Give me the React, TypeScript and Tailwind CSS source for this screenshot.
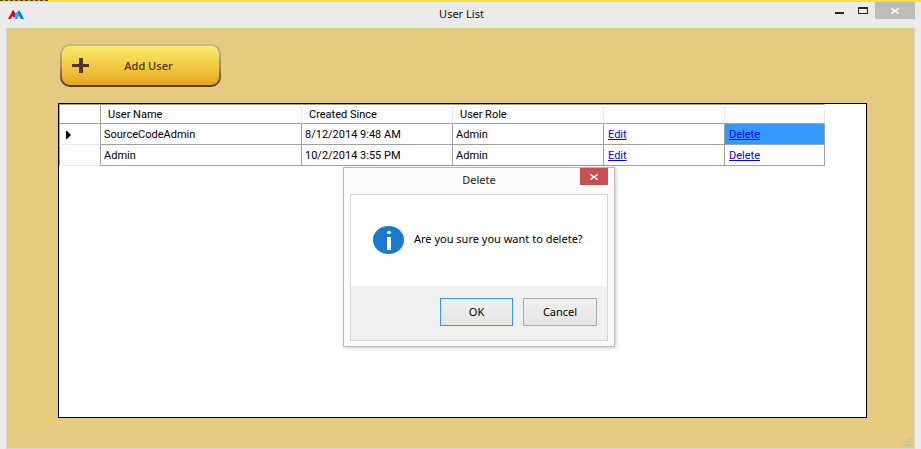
import { useState } from "react";

const users = [
  { name: "SourceCodeAdmin", created: "8/12/2014 9:48 AM", role: "Admin" },
  { name: "Admin", created: "10/2/2014 3:55 PM", role: "Admin" },
];

const headCell = "h-5 border-t border-r border-b border-t-[#a0a0a0] border-r-[#e3edfa] border-b-[#a0a0a0] bg-[#fcfcfc] pt-0.5 pl-[7px] text-left font-normal";
const bodyCell = "h-[21px] border-r border-b border-[#a0a0a0] pt-0.5 pl-[3px]";
const linkCell = "h-[21px] border-r border-b border-[#a0a0a0] pt-0.5 pl-1";

function Cross() {
  return (
    <svg viewBox="0 0 8 6" className="h-1.5 w-2" fill="none" stroke="currentColor" strokeWidth="1.4" aria-hidden="true">
      <path d="M.3 .3 7.7 5.7M7.7 .3 .3 5.7" />
    </svg>
  );
}

function TitleBar() {
  return (
    <header className="grid h-[26px] shrink-0 grid-cols-[1fr_auto_1fr] items-start pr-[6px] pl-2">
      <svg viewBox="0 0 16 10" className="mt-[7px] h-[10px] w-4" aria-hidden="true">
        <path d="M0 10 5 1 8 5 6 9 4.5 7 2.5 10Z" fill="#e00b12" />
        <path d="M5 1 7.5 6 6.5 8 4 3Z" fill="#a5131b" />
        <path d="M7 10 11 1 13 4 16 10H13L11 6.5 9 10Z" fill="#0876e8" />
        <path d="M6 9 8 4 9.5 2 11 6 9 9Z" fill="#24b7f4" />
      </svg>
      <h1 className="pt-1 text-[11px] leading-4 text-[#111]">User List</h1>
      <div className="flex items-start justify-end">
        <button aria-label="Minimize" className="flex h-[17px] w-6 items-start justify-center pt-[10px]">
          <span className="h-0.5 w-[9px] bg-[#26272c]" />
        </button>
        <button aria-label="Maximize" className="flex h-[17px] w-6 items-start justify-center pt-[5px]">
          <span className="h-[7px] w-[10px] border border-t-2 border-[#26272c]" />
        </button>
        <button aria-label="Close" className="flex h-[17px] w-10 items-center justify-center bg-[#bcbcbc] text-white">
          <Cross />
        </button>
      </div>
    </header>
  );
}

function UserTable({ onDelete }: { onDelete: () => void }) {
  return (
    <table className="w-[766px] table-fixed border-separate border-spacing-0 font-[Roboto,sans-serif] text-[11px] leading-4 text-black">
      <colgroup>
        <col className="w-[42px]" />
        <col className="w-[201px]" />
        <col className="w-[151px]" />
        <col className="w-[151px]" />
        <col className="w-[121px]" />
        <col className="w-[100px]" />
      </colgroup>
      <thead>
        <tr>
          <td className="h-5 border border-[#a0a0a0] bg-[#fcfcfc]" />
          <th className={headCell}>User Name</th>
          <th className={headCell}>Created Since</th>
          <th className={headCell}>User Role</th>
          <td className={headCell} />
          <td className={headCell} />
        </tr>
      </thead>
      <tbody>
        {users.map((user, i) => (
          <tr key={user.name}>
            <td className="h-[21px] border-r border-b border-l border-[#a0a0a0] border-b-[#e3edfa] bg-[#fcfcfc] pt-0.5 pl-1.5">
              {i === 0 && (
                <svg viewBox="0 0 5 8" className="h-2 w-[5px]" aria-hidden="true">
                  <path d="M0 0H1L5 4 1 8H0Z" />
                </svg>
              )}
            </td>
            <td className={bodyCell}>{user.name}</td>
            <td className={bodyCell}>{user.created}</td>
            <td className={bodyCell}>{user.role}</td>
            <td className={linkCell}>
              <a href="#edit" className="text-[#0000ff] underline">Edit</a>
            </td>
            <td className={i === 0 ? `${linkCell} bg-[#3399ff]` : linkCell}>
              <a href="#delete" onClick={onDelete} className="text-[#0000ff] underline">Delete</a>
            </td>
          </tr>
        ))}
      </tbody>
    </table>
  );
}

function DeleteDialog({ onClose }: { onClose: () => void }) {
  return (
    <div
      role="dialog"
      aria-labelledby="delete-title"
      className="absolute top-[167px] left-[343px] w-[272px] border border-[#b9b9b9] bg-[#fbfbfb] px-1.5 pb-[5px] shadow-[1px_1px_4px_rgba(0,0,0,0.2)]"
    >
      <div className="grid h-[26px] grid-cols-[28px_1fr_28px] items-start">
        <h2 id="delete-title" className="col-start-2 pt-1 text-center text-[11px] leading-4 text-[#222]">Delete</h2>
        <button aria-label="Close" onClick={onClose} className="flex h-[17px] items-center justify-center bg-[#c75050] text-white">
          <Cross />
        </button>
      </div>
      <div className="border border-[#d5d5d5] bg-white">
        <div className="flex h-[91px] items-center gap-[10px] pb-0.5 pl-[22px]">
          <svg viewBox="0 0 31 28" className="h-7 w-[31px]" aria-hidden="true">
            <ellipse cx="15.5" cy="14" rx="15.5" ry="14" fill="#1979ca" />
            <ellipse cx="16" cy="6.5" rx="2.2" ry="1.6" fill="white" />
            <path d="M14 11h4v13h-4Z" fill="white" />
          </svg>
          <p className="pb-0.5 text-[11px] leading-4 text-black">Are you sure you want to delete?</p>
        </div>
        <div className="flex justify-end gap-[10px] bg-[#f0f0f0] pt-3 pr-[10px] pb-[14px] text-[11px] text-black">
          <button onClick={onClose} className="h-7 w-[73px] border border-[#3399ff] bg-linear-to-b from-[#f0f0f0] to-[#e5e5e5]">OK</button>
          <button onClick={onClose} className="h-7 w-[74px] border border-[#acacac] bg-linear-to-b from-[#f0f0f0] to-[#e5e5e5]">Cancel</button>
        </div>
      </div>
    </div>
  );
}

export default function App() {
  const [confirming, setConfirming] = useState(true);

  return (
    <div className="relative flex min-h-screen flex-col bg-[#ebebeb] font-['Noto_Sans',sans-serif]">
      <div className="flex h-0.5 shrink-0 border-b border-[#d3d3d3] bg-[#fbe13c]">
        <div className="w-12 border-t border-dashed border-[#604a20] bg-[#d9ad24]" />
      </div>
      <TitleBar />
      <main className="mr-[6px] ml-1.5 flex grow flex-col border-x border-b border-[#d6d6d6] bg-[#e6ca7f] pt-4 pr-[47px] pl-[51px]">
        <button className="ml-0.5 h-[43px] w-[161px] rounded-[10px] bg-linear-to-b from-[#c9b98f] via-[#a58d67] to-[#57392c] p-0.5 text-[#53352b]">
          <span className="grid h-full grid-cols-[38px_1fr_22px] items-center rounded-lg bg-linear-to-b from-[#f8ec6b] via-[#f2cc44] to-[#e8a521]">
            <svg viewBox="0 0 17 15" className="ml-[10px] h-[15px] w-[17px]" aria-hidden="true">
              <path d="M7 0h4v6h6v3h-6v6H7V9H0V6h7Z" fill="currentColor" />
            </svg>
            <span className="text-center font-['Open_Sans',sans-serif] text-[11px] leading-4 font-semibold">Add User</span>
          </span>
        </button>
        <section aria-label="Users" className="mt-4 mb-[30px] grow border border-black bg-white">
          <UserTable onDelete={() => setConfirming(true)} />
        </section>
        <svg viewBox="0 0 8 8" className="absolute right-[10px] bottom-[3px] h-2 w-2 fill-[#bdbdbd]" aria-hidden="true">
          <path d="M6 0h2v2H6ZM3 3h2v2H3ZM6 3h2v2H6ZM0 6h2v2H0ZM3 6h2v2H3ZM6 6h2v2H6Z" />
        </svg>
      </main>
      {confirming && <DeleteDialog onClose={() => setConfirming(false)} />}
    </div>
  );
}
